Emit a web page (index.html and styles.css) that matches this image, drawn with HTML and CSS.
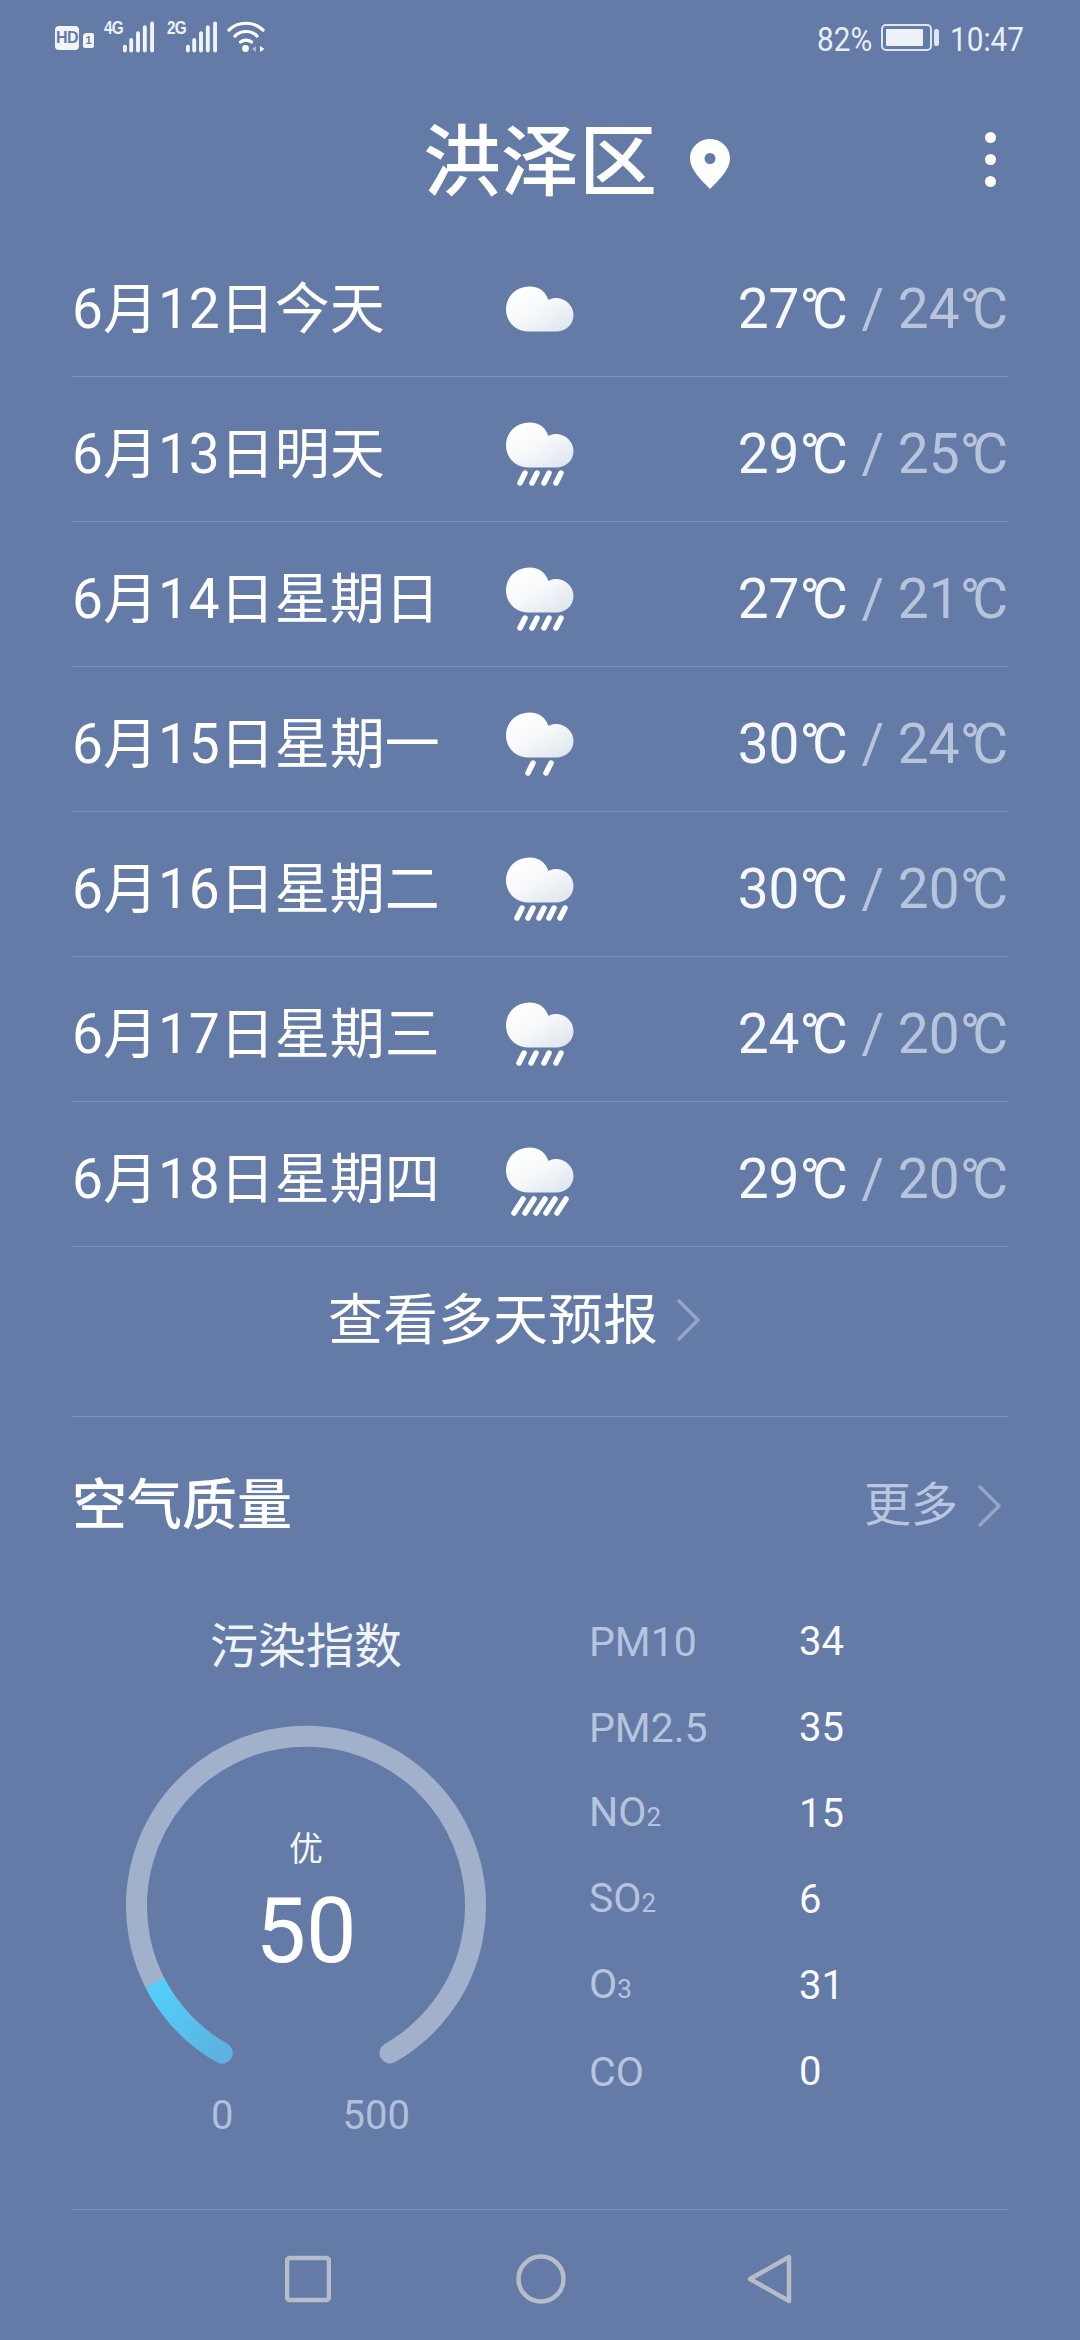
FILE: index.html
```html
<!DOCTYPE html>
<html lang="zh-CN">
<head>
<meta charset="utf-8">
<title>洪泽区</title>
<link rel="stylesheet" href="styles.css">
</head>
<body>
<svg class="defs" width="0" height="0" aria-hidden="true">
  <defs>
    <linearGradient id="cloudFill" x1="0.1" y1="0.1" x2="0.9" y2="1">
      <stop offset="0" stop-color="#ffffff"/>
      <stop offset="0.45" stop-color="#f7f9fb"/>
      <stop offset="1" stop-color="#dde5ee"/>
    </linearGradient>
    <linearGradient id="blueFill" x1="0" y1="0" x2="1" y2="1">
      <stop offset="0" stop-color="#52d0fb"/>
      <stop offset="1" stop-color="#5cb2e0"/>
    </linearGradient>
    <symbol id="cloud" viewBox="0 0 68 46">
      <path fill="url(#cloudFill)" d="M22 45.500C10 45.500 0 36 0 23.500C0 10 10.500 0.500 24 0.500C33 0.500 39.500 5.500 42.500 14C45 12.500 47.500 12 50 12C60 12 67.500 20 67.500 29C67.500 38.500 60 45.500 50 45.500Z"/>
    </symbol>
    <symbol id="signal" viewBox="0 0 34 32">
      <path d="M3 26v4M9.500 19v11M16.500 12v18M23.500 6v24M31 2v28" fill="none" stroke="currentColor" stroke-width="4" stroke-linecap="round"/>
    </symbol>
  </defs>
</svg>

<div class="phone">
  <header class="status">
    <div class="status-left">
      <span class="hd">HD</span>
      <span class="sim">1</span>
      <span class="net">4G</span>
      <svg class="signal"><use href="#signal"/></svg>
      <span class="net net-second">2G</span>
      <svg class="signal"><use href="#signal"/></svg>
      <svg class="wifi" viewBox="0 0 39 32">
        <path d="M2 9C11 0 27 0 36 9M8 15C14 9 24 9 30 15M13.500 21C16.500 18.500 21.500 18.500 24.500 21" fill="none" stroke="#fff" stroke-width="3.200" stroke-linecap="round"/>
        <circle cx="18.500" cy="27.500" r="3.400" fill="#fff"/>
        <path d="M29 25v6l-4-3z" fill="#aab9d6"/>
        <path d="M33 25v6l4.500-3z" fill="#fff"/>
      </svg>
    </div>
    <div class="status-right">
      <span class="status-text pct">82%</span>
      <span class="battery"><span class="battery-level"></span></span>
      <span class="battery-nub"></span>
      <span class="status-text time">10:47</span>
    </div>
  </header>

  <div class="title-bar">
    <h1 class="city">洪泽区</h1>
    <svg class="pin" viewBox="0 0 40 50">
      <path fill="#fff" fill-rule="evenodd" d="M20 50C12 42 0 31 0 19.500C0 8.500 9 0 20 0S40 8.500 40 19.500C40 31 28 42 20 50ZM20 14a5.500 5.500 0 1 0 0 11a5.500 5.500 0 1 0 0-11Z"/>
    </svg>
    <div class="more-dots"><i></i><i></i><i></i></div>
  </div>

  <main class="content">
    <ul class="days">
      <li class="day">
        <span class="date">6月12日今天</span>
        <svg class="wx" viewBox="0 -9 68 64"><use href="#cloud" width="68" height="46"/></svg>
        <span class="temps">27<i>°</i>C <em>/ 24<i>°</i>C</em></span>
      </li>
      <li class="day">
        <span class="date">6月13日明天</span>
        <svg class="wx" viewBox="0 0 68 64"><use href="#cloud" width="68" height="46"/><path class="rain" d="M19 51l-5 10M31 51l-5 10M43 51l-5 10M55 51l-5 10"/></svg>
        <span class="temps">29<i>°</i>C <em>/ 25<i>°</i>C</em></span>
      </li>
      <li class="day">
        <span class="date">6月14日星期日</span>
        <svg class="wx" viewBox="0 0 68 64"><use href="#cloud" width="68" height="46"/><path class="rain" d="M19 51l-5 10M31 51l-5 10M43 51l-5 10M55 51l-5 10"/></svg>
        <span class="temps">27<i>°</i>C <em>/ 21<i>°</i>C</em></span>
      </li>
      <li class="day">
        <span class="date">6月15日星期一</span>
        <svg class="wx" viewBox="0 0 68 64"><use href="#cloud" width="68" height="46"/><path class="rain" d="M27 51l-5 10M45 51l-5 10"/></svg>
        <span class="temps">30<i>°</i>C <em>/ 24<i>°</i>C</em></span>
      </li>
      <li class="day">
        <span class="date">6月16日星期二</span>
        <svg class="wx" viewBox="0 0 68 64"><use href="#cloud" width="68" height="46"/><path class="rain" d="M16 51l-5 10M27 51l-5 10M38 51l-5 10M48 51l-5 10M59 51l-5 10"/></svg>
        <span class="temps">30<i>°</i>C <em>/ 20<i>°</i>C</em></span>
      </li>
      <li class="day">
        <span class="date">6月17日星期三</span>
        <svg class="wx" viewBox="0 0 68 64"><use href="#cloud" width="68" height="46"/><path class="rain" d="M18 51l-5 10M30 51l-5 10M43 51l-5 10M55 51l-5 10"/></svg>
        <span class="temps">24<i>°</i>C <em>/ 20<i>°</i>C</em></span>
      </li>
      <li class="day">
        <span class="date">6月18日星期四</span>
        <svg class="wx wx-heavy" viewBox="0 0 68 70"><use href="#cloud" width="68" height="46"/><path class="rain" d="M17 52l-9 14M28 52l-9 14M39 52l-9 14M49 52l-9 14M60 52l-9 14"/></svg>
        <span class="temps">29<i>°</i>C <em>/ 20<i>°</i>C</em></span>
      </li>
    </ul>

    <a class="forecast-link">
      <span>查看多天预报</span>
      <svg class="chevron" viewBox="0 0 24 42"><path d="M2 2l19 19l-19 19"/></svg>
    </a>

    <section class="air">
      <div class="air-head">
        <h2 class="air-title">空气质量</h2>
        <span class="air-more">更多</span>
        <svg class="chevron" viewBox="0 0 24 42"><path d="M2 2l19 19l-19 19"/></svg>
      </div>
      <div class="air-body">
        <div class="gauge-col">
          <div class="gauge-title">污染指数</div>
          <div class="gauge">
            <svg class="gauge-ring" viewBox="0 0 360 340">
              <path class="ring-track" d="M96 327A169.500 169.500 0 1 1 264 327"/>
              <path class="ring-value" d="M96 327A169.500 169.500 0 0 1 29 257"/>
              <circle class="ring-cap" cx="96" cy="327" r="10.500"/>
            </svg>
            <div class="gauge-grade">优</div>
            <div class="gauge-value">50</div>
          </div>
          <div class="gauge-scale"><span>0</span><span>500</span></div>
        </div>
        <dl class="pollutants">
          <dt>PM10</dt><dd>34</dd>
          <dt>PM2.5</dt><dd>35</dd>
          <dt>NO<small>2</small></dt><dd>15</dd>
          <dt>SO<small>2</small></dt><dd>6</dd>
          <dt>O<small>3</small></dt><dd>31</dd>
          <dt>CO</dt><dd>0</dd>
        </dl>
      </div>
    </section>
  </main>

  <nav class="nav">
    <svg class="nav-icon" viewBox="0 0 46 50"><rect x="2" y="4" width="42" height="42" rx="3"/></svg>
    <svg class="nav-icon" viewBox="0 0 50 50"><circle cx="25" cy="25" r="22.500"/></svg>
    <svg class="nav-icon" viewBox="0 0 46 50"><path d="M42 3V47L3 25Z"/></svg>
  </nav>
</div>
</body>
</html>
```
FILE: styles.css
```css
* { box-sizing: border-box; }
html, body { margin: 0; padding: 0; }
body {
  width: 1080px;
  height: 2340px;
  overflow: hidden;
  background: #637ba6;
  color: #fff;
  font-family: Roboto, "Noto Sans CJK SC", sans-serif;
}
.defs { position: absolute; }
.phone { width: 1080px; height: 2340px; display: flex; flex-direction: column; }

/* status bar */
.status {
  height: 76px;
  display: flex;
  justify-content: space-between;
  align-items: flex-start;
  padding: 21px 58px 0 55px;
  color: #eef2f9;
}
.status-left, .status-right { display: flex; align-items: flex-start; }
.hd {
  width: 24px; height: 24px; margin-top: 5px;
  background: #f1f4fa; border-radius: 4px;
  color: #637ba6; font: 700 16px/24px "Liberation Sans", sans-serif;
  text-align: center; letter-spacing: -0.5px;
}
.sim {
  width: 11px; height: 15px; margin: 12px 0 0 4px;
  background: #f1f4fa; border-radius: 4px 2px 2px 2px;
  color: #637ba6; font: 700 11px/15px "Liberation Sans", sans-serif;
  text-align: center;
}
.net {
  width: 18px; margin-left: 10px;
  font: 700 18px/15px "Liberation Sans", sans-serif;
  letter-spacing: -1px; white-space: nowrap;
  transform-origin: left top; transform: scaleX(0.85);
}
.net-second { margin-left: 12px; }
.signal { width: 33px; height: 32px; color: #f1f4fa; }
.wifi { width: 39px; height: 32px; margin-left: 9px; }
.status-right { padding-top: 3px; }
.status-text {
  font-size: 33px; font-weight: 400; line-height: 32px; white-space: nowrap; color: #e9eef7;
  transform-origin: left center; transform: scaleX(0.9);
}
.pct { width: 55px; }
.time { width: 72px; margin-left: 11px; }
.battery {
  width: 51px; height: 27px; margin: 0 0 0 9px;
  border: 2px solid #dfe6f2; border-radius: 5px; padding: 3px;
  display: flex;
}
.battery-level { width: 37px; background: #eef1f8; border-radius: 1px; }
.battery-nub { width: 5px; height: 17px; margin: 5px 0 0 2px; background: #dfe6f2; border-radius: 2px; }

/* title */
.title-bar {
  height: 156px;
  display: flex;
  align-items: center;
  padding: 20px 84px 0 423px;
}
.city { margin: 0; font-size: 78px; font-weight: 500; line-height: 90px; white-space: nowrap; }
.pin { width: 40px; height: 50px; margin: 0 0 0 33px; }
.more-dots { margin: -10px 0 0 auto; display: flex; flex-direction: column; gap: 11px; }
.more-dots i { width: 11px; height: 11px; border-radius: 50%; background: #fff; display: block; }

/* days */
.content { flex: 1; padding: 0 72px; }
.days { list-style: none; margin: 0; padding: 0; }
.day {
  height: 145px;
  border-bottom: 1px solid #7b92bd;
  display: grid;
  grid-template-columns: 434px 68px 1fr;
  align-items: center;
}
.date { font-size: 55px; line-height: 70px; white-space: nowrap; padding-top: 10px; }
.wx { width: 68px; height: 64px; margin-top: 9px; overflow: visible; }
.wx-heavy { height: 70px; margin-top: 15px; }
.rain { fill: none; stroke: #fff; stroke-width: 5.500; stroke-linecap: round; }
.temps { font-size: 55px; line-height: 70px; text-align: right; white-space: nowrap; color: #f6f8fb; padding-top: 10px; }
.temps em { font-style: normal; color: #b8c4dc; }
.temps i { font-style: normal; letter-spacing: -8px; }

.forecast-link {
  height: 170px;
  border-bottom: 1px solid #7b92bd;
  display: flex;
  align-items: flex-start;
  padding: 38px 0 0 256px;
  font-size: 55px;
  line-height: 70px;
}
.chevron { width: 24px; height: 42px; fill: none; stroke: #93a5c4; stroke-width: 3.500; stroke-linecap: round; stroke-linejoin: round; }
.forecast-link .chevron { margin: 14px 0 0 19px; }

/* air quality */
.air-head { display: flex; align-items: center; padding-top: 52px; height: 124px; }
.air-title { margin: 0; font-size: 55px; font-weight: 500; line-height: 66px; flex: 1; }
.air-more { font-size: 47px; line-height: 60px; color: #b8c6df; }
.air-head .chevron { margin: 2px 6px 0 20px; }
.air-body { display: flex; }
.gauge-col { width: 468px; display: flex; flex-direction: column; align-items: center; }
.gauge-title { font-size: 48px; line-height: 64px; color: #f0f3f8; margin-top: 74px; }
.gauge { position: relative; width: 360px; height: 340px; margin-top: 47px; }
.gauge-ring { width: 360px; height: 340px; overflow: visible; display: block; }
.ring-track, .ring-value { fill: none; stroke-width: 21; }
.ring-track { stroke: #a1b1cc; stroke-linecap: round; }
.ring-value { stroke: url(#blueFill); stroke-linecap: butt; }
.ring-cap { fill: #5cb2e0; }
.gauge-grade {
  position: absolute; left: 0; right: 0; top: 99px;
  text-align: center; font-size: 34px; line-height: 48px; color: #f4f6fa;
}
.gauge-value {
  position: absolute; left: 0; right: 0; top: 151px;
  text-align: center; font-size: 90px; line-height: 110px;
}
.gauge-scale {
  align-self: stretch;
  display: flex;
  gap: 109px;
  padding-left: 139px;
  margin-top: 25px;
  font-size: 40px;
  line-height: 50px;
  color: #b2c0da;
}
.pollutants {
  margin: 58px 0 0 49px;
  display: grid;
  grid-template-columns: 210px 100px;
  grid-auto-rows: 86px;
  align-items: center;
  align-content: start;
  font-size: 40px;
  line-height: 50px;
}
.pollutants dt { color: #b6c4de; font-size: 41px; }
.pollutants dd { margin: 0; color: #f7f9fc; }
.pollutants small { font-size: 26px; }

/* nav */
.nav {
  height: 131px;
  margin: 0 72px;
  border-top: 1px solid #7b92bd;
  display: flex;
  align-items: flex-start;
  padding: 44px 0 0 213px;
}
.nav-icon { height: 50px; width: 46px; fill: none; stroke: #b6bcc9; stroke-width: 4.500; stroke-linejoin: round; }
.nav-icon:nth-child(2) { width: 50px; margin-left: 185px; }
.nav-icon:nth-child(3) { margin-left: 181px; }
```
